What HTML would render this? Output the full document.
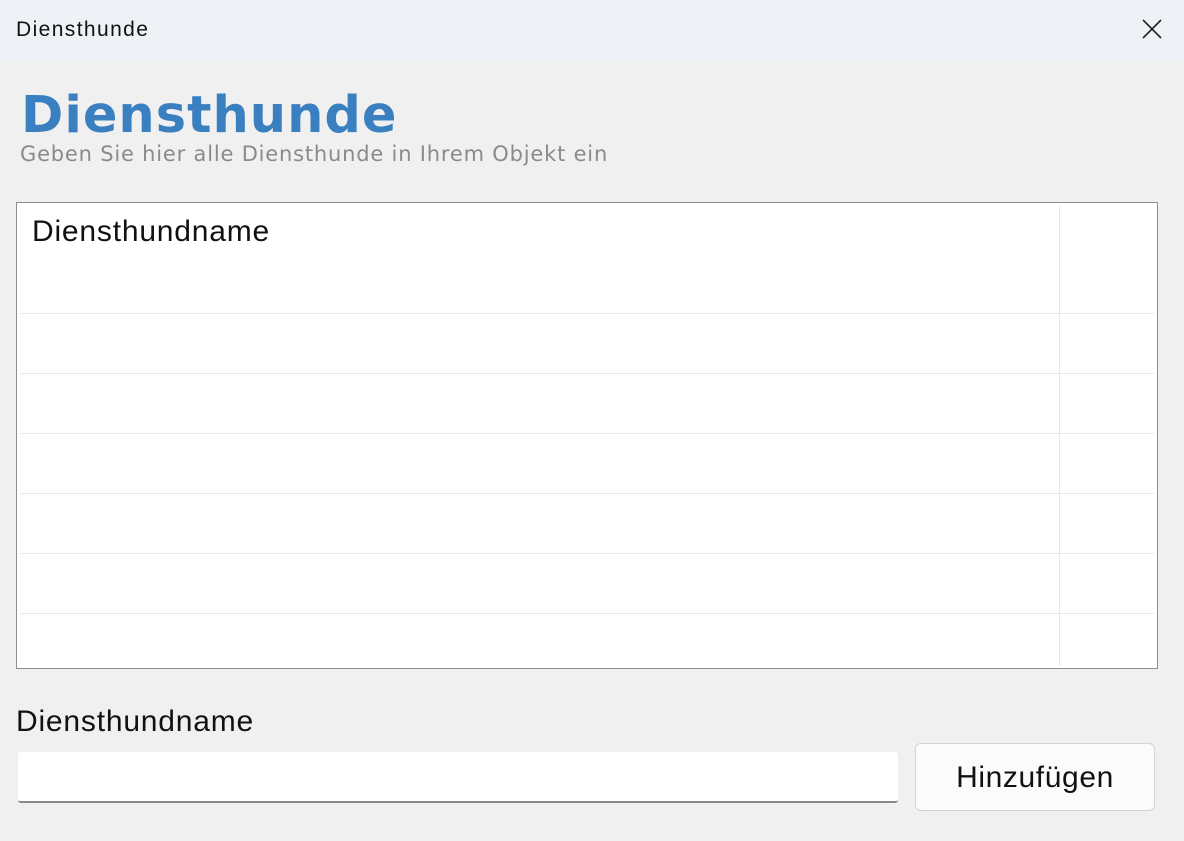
<!DOCTYPE html><html><head><style>
body{margin:0;width:1184px;height:841px;overflow:hidden;background:#f0f0f0;font-family:"Liberation Sans","DejaVu Sans",sans-serif;position:relative}
.tb{position:absolute;left:0;top:0;width:1184px;height:60px;background:#eef2f7}
.a{position:absolute;white-space:nowrap}
.row{position:absolute;left:20px;width:1134px;height:1px;background:#e8e8e8}
</style></head><body>
<div class="tb"></div>
<div class="a" style="left:16px;top:18px;font-size:21px;letter-spacing:1.4px;color:#111">Diensthunde</div>
<svg class="a" style="left:1141px;top:18px" width="22" height="22"><path d="M2 2L20 20M20 2L2 20" stroke="#222" stroke-width="1.6"/></svg>
<div class="a" style="left:21px;top:86px;font-family:'DejaVu Sans',sans-serif;font-weight:bold;font-size:51px;color:#3a80c0;letter-spacing:1px">Diensthunde</div>
<div class="a" style="left:20px;top:142px;font-family:'DejaVu Sans',sans-serif;font-size:21px;letter-spacing:0.8px;color:#8a8a8a">Geben Sie hier alle Diensthunde in Ihrem Objekt ein</div>
<div class="a" style="left:16px;top:202px;width:1140px;height:465px;border:1px solid #8a8f95;background:#fff"></div>
<div class="a" style="left:32px;top:215px;font-size:30px;letter-spacing:0.8px;color:#111">Diensthundname</div>
<div class="a" style="left:1059px;top:206px;width:1px;height:460px;background:#e8e8e8"></div>
<div class="row" style="top:313px"></div><div class="row" style="top:373px"></div><div class="row" style="top:433px"></div><div class="row" style="top:493px"></div><div class="row" style="top:553px"></div><div class="row" style="top:613px"></div>
<div class="a" style="left:16px;top:705px;font-size:30px;letter-spacing:0.8px;color:#111">Diensthundname</div>
<div class="a" style="left:18px;top:752px;width:880px;height:49px;background:#fff;border-bottom:2px solid #888;border-radius:3px"></div>
<div class="a" style="left:915px;top:743px;width:238px;height:66px;background:#fbfbfb;border:1px solid #d4d4d4;border-radius:6px;font-size:30px;letter-spacing:0.6px;color:#111;text-align:center;line-height:68px">Hinzufügen</div>
</body></html>
